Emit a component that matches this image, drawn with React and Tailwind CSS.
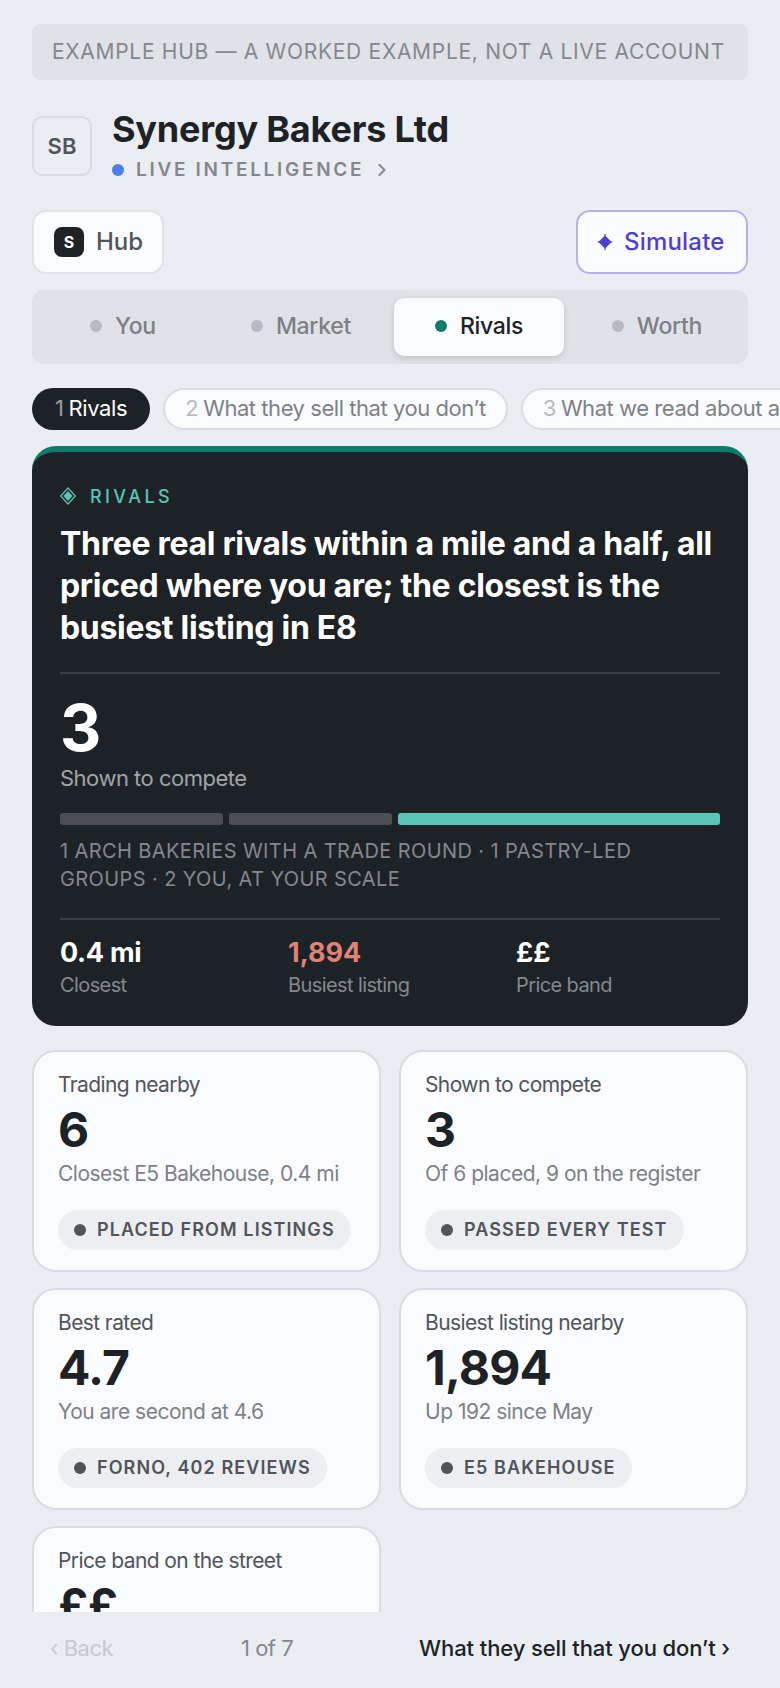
import { ChevronRight } from "lucide-react";

const tabs = [
  { label: "You" },
  { label: "Market" },
  { label: "Rivals", active: true },
  { label: "Worth" },
];

const cards = [
  { title: "Trading nearby", value: "6", note: "Closest E5 Bakehouse, 0.4 mi", tag: "PLACED FROM LISTINGS" },
  { title: "Shown to compete", value: "3", note: "Of 6 placed, 9 on the register", tag: "PASSED EVERY TEST" },
  { title: "Best rated", value: "4.7", note: "You are second at 4.6", tag: "FORNO, 402 REVIEWS" },
  { title: "Busiest listing nearby", value: "1,894", note: "Up 192 since May", tag: "E5 BAKEHOUSE" },
  { title: "Price band on the street", value: "££", note: "Same band as you", tag: "FROM LISTINGS" },
];

function StatCard({ title, value, note, tag }) {
  return (
    <div className="h-[222px] rounded-[24px] border-2 border-[#d9dce3] bg-[#fafbfd] px-6 pt-[18px]">
      <div className="text-[21px] leading-[30px] tracking-[-0.6px] text-[#50545b]">{title}</div>
      <div className="mt-[1px] text-[48px] leading-[58px] font-bold tracking-[-0.8px] text-[#1d2226]">{value}</div>
      <div className="text-[21px] leading-[30px] tracking-[-0.5px] text-[#7d8187]">{note}</div>
      <div className="mt-[21px] inline-flex h-10 items-center gap-[11px] rounded-full bg-[#eceef2] pr-4 pl-4 text-[18px] font-semibold tracking-[1.1px] text-[#50545b]">
        <span className="h-3 w-3 rounded-full bg-[#50545b]" />
        {tag}
      </div>
    </div>
  );
}

export default function App() {
  return (
    <div className="flex h-[1688px] flex-col overflow-hidden bg-[#eaedf2] font-['Inter',sans-serif]">
      <div className="flex-1 overflow-hidden">
        <div className="px-8 pt-6">
          <div className="flex h-14 items-center rounded-lg bg-[#dfe2e7] pl-5 text-[21px] tracking-[0.7px] whitespace-nowrap text-[#84888e]">
            EXAMPLE HUB — A WORKED EXAMPLE, NOT A LIVE ACCOUNT
          </div>

          <div className="mt-9 flex gap-5">
            <div className="flex h-[60px] w-[60px] items-center justify-center rounded-[10px] border-2 border-[#d9dce3] text-[22px] font-semibold text-[#50545b]">
              SB
            </div>
            <div>
              <div className="-mt-[11px] text-[36px] leading-[48px] font-bold tracking-[-0.2px] text-[#1d2226]">
                Synergy Bakers Ltd
              </div>
              <div className="mt-[3px] flex items-center text-[19px] font-semibold tracking-[2.7px] text-[#84888e]">
                <span className="mr-3 h-3 w-3 rounded-full bg-[#4d7fec]" />
                LIVE INTELLIGENCE
                <ChevronRight className="ml-[8px] h-5 w-5" strokeWidth={2.5} />
              </div>
            </div>
          </div>

          <div className="mt-[25px] flex justify-between">
            <div className="flex h-16 w-[132px] items-center gap-3 rounded-[14px] border-2 border-[#dfe2e7] bg-[#fafbfd] pl-[20px] text-[24px] font-medium text-[#50545b]">
              <span className="flex h-[30px] w-[30px] items-center justify-center rounded-lg bg-[#1d2226] text-[16px] font-bold text-white">S</span>
              Hub
            </div>
            <div className="flex h-16 w-[172px] items-center gap-[11px] rounded-[14px] border-2 border-[#b9b2e8] bg-[#fafbfd] pl-[19px] text-[24px] font-medium tracking-[0.2px] text-[#4f3fd0]">
              <svg width="16" height="18" viewBox="0 0 16 18" fill="currentColor">
                <path d="M8 3.5 13.5 9 8 14.5 2.5 9Z" strokeLinejoin="round" stroke="currentColor" strokeWidth="1.6" />
                <path d="M8 1V17M0.5 9H15.5" stroke="currentColor" strokeWidth="1.2" />
              </svg>
              Simulate
            </div>
          </div>

          <div className="mt-4 grid h-[74px] grid-cols-4 gap-2 rounded-[12px] bg-[#dfe2e7] px-[6px] py-2">
            {tabs.map((t) => (
              <div
                key={t.label}
                className={`flex items-center justify-center gap-[13px] rounded-[10px] text-[23px] font-medium tracking-[-0.3px] ${
                  t.active ? "bg-[#fafbfd] text-[#1d2226] shadow-[0_2px_6px_rgba(0,0,0,0.15)]" : "text-[#7d8187]"
                }`}
              >
                <span className={`-mt-[2px] h-3 w-3 rounded-full ${t.active ? "bg-[#0f7b6c]" : "bg-[#b7bbc1]"}`} />
                {t.label}
              </div>
            ))}
          </div>

          <div className="mt-6 flex w-[900px] gap-[13px]">
            <div className="flex h-[42px] items-center gap-[5px] rounded-full bg-[#1d2226] px-[23px] text-[22px] tracking-[-0.4px] text-white">
              <span className="text-[#9a9ea3]">1</span> Rivals
            </div>
            <div className="flex h-[42px] items-center gap-[5px] rounded-full border-2 border-[#d9dce3] bg-[#fafbfd] px-[20px] text-[22px] tracking-[-0.45px] text-[#7d8187]">
              <span className="text-[#b7bbc1]">2</span> What they sell that you don’t
            </div>
            <div className="flex h-[42px] items-center gap-[5px] rounded-full border-2 border-[#d9dce3] bg-[#fafbfd] px-[20px] text-[22px] tracking-[-0.45px] text-[#7d8187]">
              <span className="text-[#b7bbc1]">3</span> What we read about a rival
            </div>
          </div>

          <div className="mt-4 h-[580px] rounded-[24px] border-t-[6px] border-[#0f7b6c] bg-[#1d2226] px-7 pt-[31px]">
            <div className="flex items-center gap-[14px] text-[18px] font-medium tracking-[3.4px] text-[#5ac5b7]">
              <svg width="16" height="18" viewBox="0 0 16 18" fill="none" stroke="currentColor" strokeWidth="1.2">
                <path d="M8 1 15.4 9 8 17 0.6 9Z" />
                <path d="M8 4 12.6 9 8 14 3.4 9Z" fill="currentColor" stroke="none" />
              </svg>
              RIVALS
            </div>
            <div className="mt-[13px] text-[32px] leading-[42px] font-bold tracking-[-0.3px] text-white">
              Three real rivals within a mile and a half, all priced where you are; the closest is the busiest listing in E8
            </div>
            <div className="mt-[23px] h-[2px] bg-[#3a3f44]" />
            <div className="mt-[15px] text-[64px] leading-[78px] font-bold text-white">3</div>
            <div className="-mt-[4px] text-[22px] leading-[30px] tracking-[-0.5px] text-[#a0a4a8]">Shown to compete</div>
            <div className="mt-[20px] flex h-3 gap-[6px]">
              <div className="w-[163px] rounded-[3px] bg-[#4b4f54]" />
              <div className="w-[163px] rounded-[3px] bg-[#4b4f54]" />
              <div className="flex-1 rounded-[3px] bg-[#5ac5b7]" />
            </div>
            <div className="mt-[12px] text-[20px] leading-[28px] tracking-[0.4px] text-[#84888e]">
              1 ARCH BAKERIES WITH A TRADE ROUND · 1 PASTRY-LED GROUPS · 2 YOU, AT YOUR SCALE
            </div>
            <div className="mt-[25px] h-[2px] bg-[#3a3f44]" />
            <div className="mt-[15px] grid grid-cols-3 gap-6">
              <div>
                <div className="text-[27px] leading-[36px] font-bold tracking-[-0.3px] text-white">0.4 mi</div>
                <div className="text-[20px] leading-[28px] tracking-[-0.6px] text-[#84888e]">Closest</div>
              </div>
              <div>
                <div className="text-[27px] leading-[36px] font-bold text-[#e08274]">1,894</div>
                <div className="text-[20px] leading-[28px] tracking-[-0.6px] text-[#84888e]">Busiest listing</div>
              </div>
              <div>
                <div className="text-[27px] leading-[36px] font-bold text-white">££</div>
                <div className="text-[20px] leading-[28px] tracking-[-0.6px] text-[#84888e]">Price band</div>
              </div>
            </div>
          </div>

          <div className="mt-6 grid grid-cols-2 gap-x-[18px] gap-y-4">
            {cards.map((c) => (
              <StatCard key={c.title} {...c} />
            ))}
          </div>
        </div>
      </div>

      <div className="flex h-[76px] items-start justify-between px-[50px] pt-[20px] text-[22px] tracking-[-0.5px]">
        <div className="text-[#c6c9ce]">‹ Back</div>
        <div className="ml-[2px] text-[#84888e]">1 of 7</div>
        <div className="font-medium tracking-[-0.1px] text-[#1d2226]">What they sell that you don’t ›</div>
      </div>
    </div>
  );
}
